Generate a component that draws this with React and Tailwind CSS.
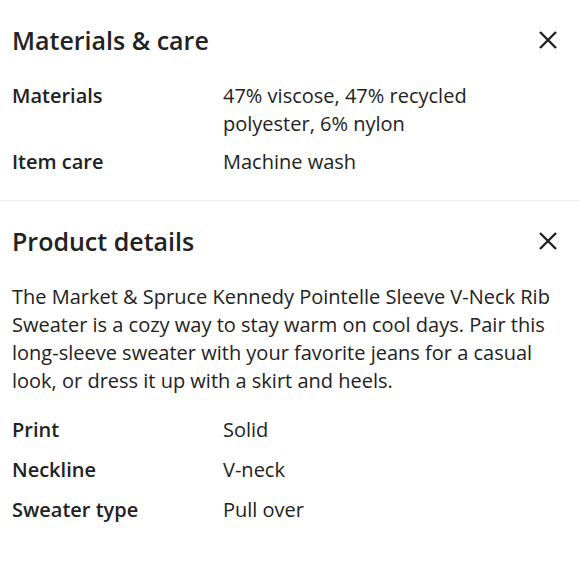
function CloseIcon() {
  return (
    <svg width="20" height="20" viewBox="0 0 20 20" className="shrink-0 text-[#222]">
      <path d="M2 2 L18 18 M18 2 L2 18" stroke="currentColor" strokeWidth="2.4" strokeLinecap="butt" />
    </svg>
  )
}

function Row({ label, children }) {
  return (
    <div className="flex leading-[28px]">
      <div className="w-[211px] shrink-0 font-semibold">{label}</div>
      <div className="flex-1 pr-[90px]">{children}</div>
    </div>
  )
}

function SectionHeader({ title }) {
  return (
    <div className="flex items-center justify-between h-8 pr-[22px]">
      <h2 className="text-[25px] font-semibold leading-8">{title}</h2>
      <CloseIcon />
    </div>
  )
}

export default function App() {
  return (
    <div className="w-[580px] h-[580px] bg-white text-[#222] text-[20px] font-['Open_Sans',sans-serif] overflow-hidden">
      <section className="pl-3 pt-6 pb-6 border-b border-[#ececec]">
        <SectionHeader title="Materials & care" />
        <div className="mt-[26px] flex flex-col gap-[10px]">
          <Row label="Materials">47% viscose, 47% recycled polyester, 6% nylon</Row>
          <Row label="Item care">Machine wash</Row>
        </div>
      </section>
      <section className="pl-3 pt-6">
        <SectionHeader title="Product details" />
        <p className="mt-[26px] leading-[28px] pr-3">
          The Market &amp; Spruce Kennedy Pointelle Sleeve V-Neck Rib Sweater is a cozy way to stay warm on cool days. Pair this long-sleeve sweater with your favorite jeans for a casual look, or dress it up with a skirt and heels.
        </p>
        <div className="mt-[21px] flex flex-col gap-3">
          <Row label="Print">Solid</Row>
          <Row label="Neckline">V-neck</Row>
          <Row label="Sweater type">Pull over</Row>
        </div>
      </section>
    </div>
  )
}
